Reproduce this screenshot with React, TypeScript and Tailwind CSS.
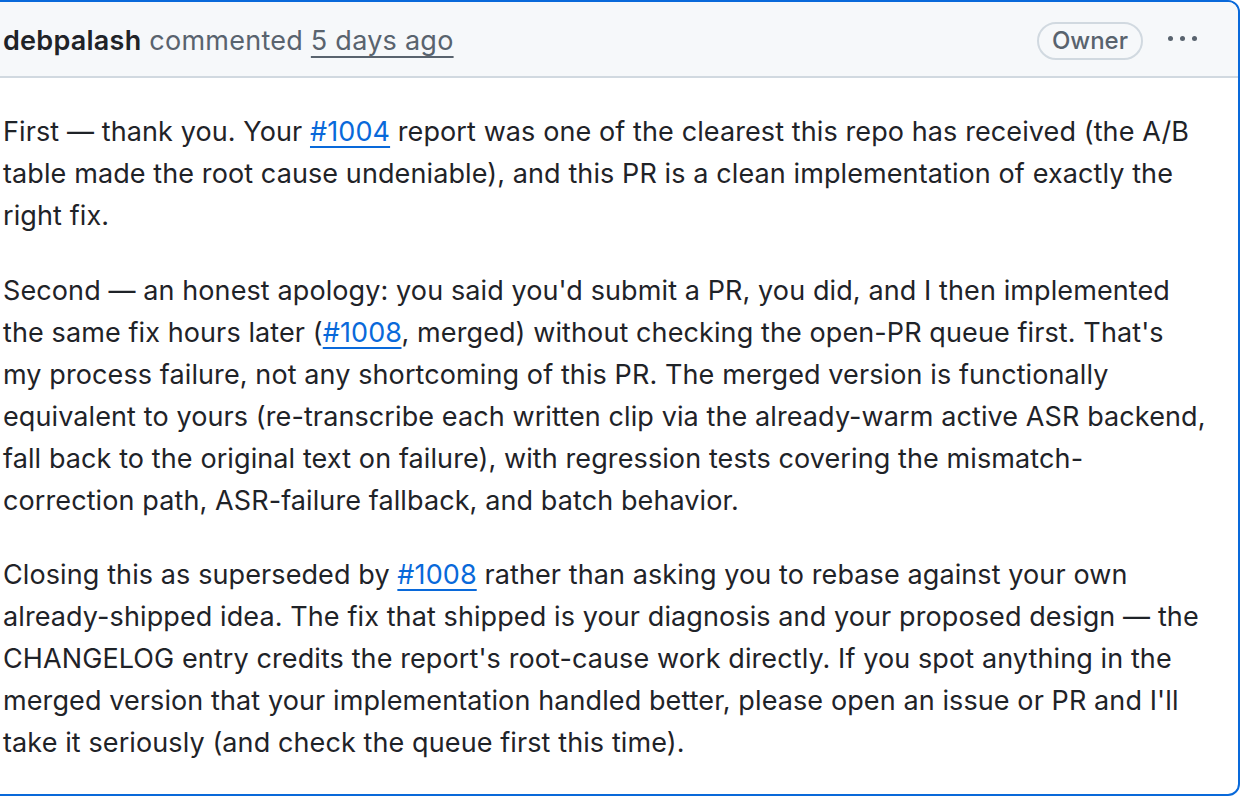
export default function App() {
  const link = "text-[#0969da] underline decoration-[1.5px] underline-offset-[5px]";
  return (
    <div
      className="h-[796px] overflow-hidden bg-white text-[#1f2328]"
      style={{ fontFamily: "Inter, 'Noto Sans', sans-serif" }}
    >
      <div className="ml-[-27px] w-[1267px] h-[796px] border-2 border-[#0969da] rounded-[12px] overflow-hidden flex flex-col">
        {/* Comment header */}
        <div className="h-[76px] shrink-0 bg-[#f6f8fa] border-b-2 border-[#d1d9e0] flex items-center justify-between pl-[28px] pr-[40px] pt-[4px]">
          <div className="text-[27px] text-[#59636e] tracking-[0.25px]">
            <span className="font-semibold text-[#1f2328]">debpalash</span>{" "}
            commented{" "}
            <span className="underline decoration-[2px] underline-offset-[6px]">
              5 days ago
            </span>
          </div>
          <div className="flex items-center gap-[25px]">
            <span className="h-[38px] px-[13px] flex items-center rounded-full border-2 border-[#d1d9e0] text-[24px] font-medium text-[#59636e]">
              Owner
            </span>
            <div className="flex items-center gap-[7px] w-[30px] -mt-[5px]">
              <span className="w-[5px] h-[5px] rounded-full bg-[#59636e]" />
              <span className="w-[5px] h-[5px] rounded-full bg-[#59636e]" />
              <span className="w-[5px] h-[5px] rounded-full bg-[#59636e]" />
            </div>
          </div>
        </div>

        {/* Comment body */}
        <div className="pl-[28px] pr-[16px] pt-[33px] text-[27px] tracking-[0.1px] leading-[42px] flex flex-col gap-[32.5px]">
          <p>
            First — thank you. Your <span className={link}>#1004</span> report
            was one of the clearest this repo has received (the A/B
            <br />
            table made the root cause undeniable), and this PR is a clean
            implementation of exactly the
            <br />
            right fix.
          </p>
          <p>
            Second — an honest apology: you said you'd submit a PR, you did,
            and I then implemented
            <br />
            the same fix hours later (<span className={link}>#1008</span>,
            merged) without checking the open-PR queue first. That's
            <br />
            my process failure, not any shortcoming of this PR. The merged
            version is functionally
            <br />
            equivalent to yours (re-transcribe each written clip via the
            already-warm active ASR backend,
            <br />
            fall back to the original text on failure), with regression tests
            covering the mismatch-
            <br />
            correction path, ASR-failure fallback, and batch behavior.
          </p>
          <p>
            Closing this as superseded by <span className={link}>#1008</span>{" "}
            rather than asking you to rebase against your own
            <br />
            already-shipped idea. The fix that shipped is your diagnosis and
            your proposed design — the
            <br />
            CHANGELOG entry credits the report's root-cause work directly. If
            you spot anything in the
            <br />
            merged version that your implementation handled better, please open
            an issue or PR and I'll
            <br />
            take it seriously (and check the queue first this time).
          </p>
        </div>
      </div>
    </div>
  );
}
